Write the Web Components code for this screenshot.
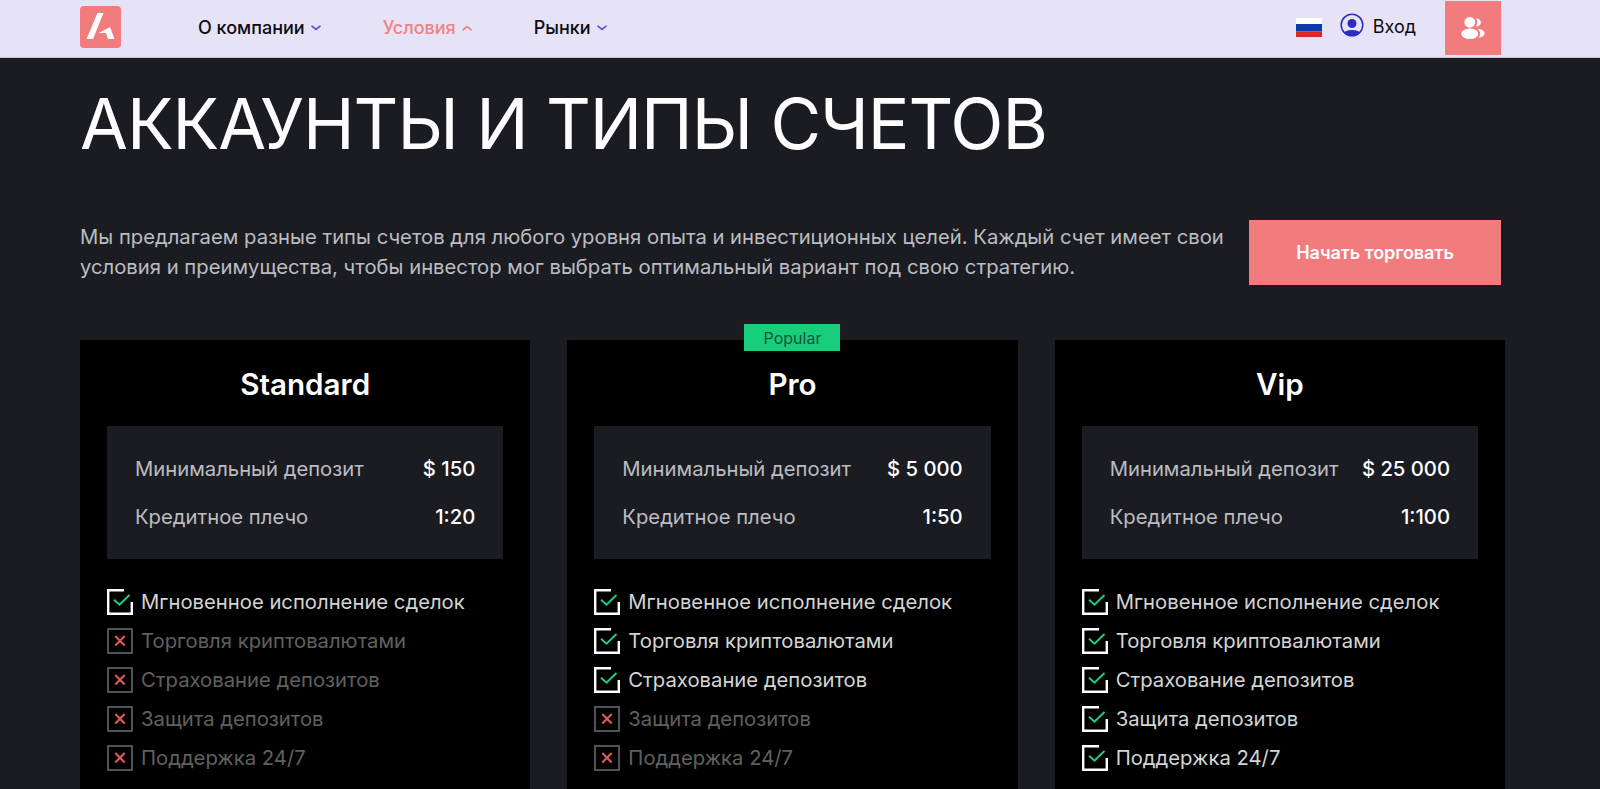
<!DOCTYPE html>
<html lang="ru">
<head>
<meta charset="utf-8">
<title>Аккаунты и типы счетов</title>
<style>
  body {
    margin: 0;
    height: 789px;
    overflow: hidden;
    background: #1b1c22;
    font-family: Inter, "Liberation Sans", sans-serif;
  }
</style>
</head>
<body>
<site-header></site-header>
<accounts-page>
  <span slot="title">АККАУНТЫ И ТИПЫ СЧЕТОВ</span>
  <span slot="intro">Мы предлагаем разные типы счетов для любого уровня опыта и инвестиционных целей. Каждый счет имеет свои<br>условия и преимущества, чтобы инвестор мог выбрать оптимальный вариант под свою стратегию.</span>
  <account-card name="Standard" deposit="$ 150" leverage="1:20" enabled="1"></account-card>
  <account-card name="Pro" deposit="$ 5 000" leverage="1:50" enabled="3" badge="Popular"></account-card>
  <account-card name="Vip" deposit="$ 25 000" leverage="1:100" enabled="5"></account-card>
</accounts-page>

<script>
class NavItem extends HTMLElement {
  constructor() {
    super();
    this.attachShadow({ mode: 'open' });
    this.shadowRoot.innerHTML = `
      <style>
        :host {
          display: flex;
          align-items: center;
          gap: 6px;
          color: #0b0b12;
          font-size: 18px;
          font-weight: 500;
          line-height: 24px;
          white-space: nowrap;
          cursor: pointer;
        }
        svg { stroke: #5b52d3; }
        :host([active]) { color: #f08286; }
        :host([active]) svg { stroke: #f08286; transform: rotate(180deg); }
      </style>
      <slot></slot>
      <svg width="10" height="6" viewBox="0 0 10 6" fill="none" stroke-width="1.7" stroke-linecap="round"><path d="M1 1.2L5 4.400L9 1.200"/></svg>
    `;
  }
}
customElements.define('nav-item', NavItem);

class SiteHeader extends HTMLElement {
  constructor() {
    super();
    this.attachShadow({ mode: 'open' });
    this.shadowRoot.innerHTML = `
      <style>
        :host {
          display: flex;
          box-sizing: border-box;
          height: 58px;
          padding: 1px 99px 0 80px;
          border-bottom: 1px solid #c3c1cf;
          background: #e7e3f7;
        }
        .logo { margin: 5px 77px 0 0; }
        nav {
          display: flex;
          gap: 62px;
          height: 54px;
          align-items: center;
        }
        .right {
          display: flex;
          margin-left: auto;
          height: 54px;
        }
        .flag { margin: 17px 18px 0 0; }
        .user { margin: 12px 9px 0 0; }
        .login {
          margin: 14px 29px 0 0;
          color: #0b0b12;
          font-size: 18px;
          line-height: 24px;
        }
        button {
          display: grid;
          place-items: center;
          width: 56px;
          height: 54px;
          padding: 0;
          border: none;
          background: #f27b7e;
        }
      </style>
      <svg class="logo" width="41" height="42" viewBox="0 0 41 42">
        <rect width="41" height="42" rx="4" fill="#f27b7e"/>
        <path fill="#fff" d="M17.500 7h6L13 33H6.500zM18.500 27L30 21l4.500 12h-6.600l-1.900-6z"/>
      </svg>
      <nav>
        <nav-item>О компании</nav-item>
        <nav-item active>Условия</nav-item>
        <nav-item>Рынки</nav-item>
      </nav>
      <div class="right">
        <svg class="flag" width="26" height="20" viewBox="0 0 26 20">
          <path fill="#fff" d="M0 0h26v7H0z"/>
          <path fill="#0a3bab" d="M0 6h26v7.500H0z"/>
          <path fill="#d8281f" d="M0 13.500h26v5.500H0z"/>
        </svg>
        <svg class="user" width="24" height="24" viewBox="0 0 24 24">
          <clipPath id="c"><circle cx="12" cy="12" r="11"/></clipPath>
          <circle cx="12" cy="12" r="10.800" fill="none" stroke="#2d2bc4" stroke-width="1.500"/>
          <circle cx="12" cy="10.500" r="4.500" fill="#2d2bc4"/>
          <ellipse cx="12" cy="21.500" rx="9" ry="4.500" fill="#2d2bc4" clip-path="url(#c)"/>
        </svg>
        <span class="login">Вход</span>
        <button aria-label="Регистрация">
          <svg width="24" height="24" viewBox="0 0 24 24" fill="#fff">
            <circle cx="8.800" cy="6.300" r="5.400"/>
            <ellipse cx="8.800" cy="17.800" rx="8.500" ry="5.300"/>
            <path d="M15 2.500a4 4 0 1 1 0 7.800c1.600-2.500 1.600-5.300 0-7.800zM16.500 13c4 0 7 1.700 7 4.200s-2.500 4.300-6 4.300c2.600-2.600 2.300-6-1-8.500z"/>
          </svg>
        </button>
      </div>
    `;
  }
}
customElements.define('site-header', SiteHeader);

class AccountsPage extends HTMLElement {
  constructor() {
    super();
    this.attachShadow({ mode: 'open' });
    this.shadowRoot.innerHTML = `
      <style>
        :host { display: block; padding: 0 95px 0 80px; }
        h1 {
          margin: 24px 0 0 0;
          color: #fdfdff;
          font-size: 69.500px;
          font-weight: 430;
          letter-spacing: -1.050px;
          line-height: 84px;
          white-space: nowrap;
        }
        .intro {
          display: flex;
          justify-content: space-between;
          margin: 54px 4px 55px 0;
        }
        p {
          margin: 2px 0 0 0;
          color: #bcbdc1;
          font-size: 20.250px;
          line-height: 29.500px;
          white-space: nowrap;
        }
        button {
          width: 252px;
          height: 65px;
          padding: 0;
          border: none;
          background: #f27b7e;
          color: #fff;
          font: 600 18px Inter, sans-serif;
          letter-spacing: -0.050px;
        }
        .cards {
          display: grid;
          grid-template-columns: repeat(3, 1fr);
          gap: 37px;
          height: 450px;
        }
      </style>
      <h1><slot name="title"></slot></h1>
      <div class="intro">
        <p><slot name="intro"></slot></p>
        <button>Начать торговать</button>
      </div>
      <div class="cards"><slot></slot></div>
    `;
  }
}
customElements.define('accounts-page', AccountsPage);

class FeatureItem extends HTMLElement {
  constructor() {
    super();
    this.attachShadow({ mode: 'open' });
  }

  connectedCallback() {
    const on = `
      <path stroke="#fff" stroke-width="2.400" d="M17 1.200H1.200v23.600h23.600V13"/>
      <path stroke="#1fcf82" stroke-width="1.900" d="M7 10.800l5.500 5L22.500 6"/>`;
    const off = `
      <path stroke="#4b5558" stroke-width="2" d="M1 1h24v24H1z"/>
      <path stroke="#d95a58" stroke-width="2.200" d="M8.300 8l9.400 9.600M17.700 8L8.300 17.600"/>`;
    this.shadowRoot.innerHTML = `
      <style>
        :host {
          display: flex;
          align-items: center;
          gap: 8px;
          height: 39px;
          color: #d4d4d4;
          font-size: 20.250px;
          white-space: nowrap;
        }
        :host([off]) { color: #606060; }
      </style>
      <svg width="26" height="26" viewBox="0 0 26 26" fill="none">${this.hasAttribute('off') ? off : on}</svg>
      <slot></slot>
    `;
  }
}
customElements.define('feature-item', FeatureItem);

class AccountCard extends HTMLElement {
  constructor() {
    super();
    this.attachShadow({ mode: 'open' });
  }

  connectedCallback() {
    const features = [
      'Мгновенное исполнение сделок',
      'Торговля криптовалютами',
      'Страхование депозитов',
      'Защита депозитов',
      'Поддержка 24/7'
    ];
    const enabled = Number(this.getAttribute('enabled'));
    const badge = this.getAttribute('badge');
    this.shadowRoot.innerHTML = `
      <style>
        :host {
          display: block;
          position: relative;
          box-sizing: border-box;
          padding: 26px 27px 0;
          background: #000;
        }
        .badge {
          position: absolute;
          top: -16px;
          left: 50%;
          transform: translateX(-50%);
          box-sizing: border-box;
          width: 96px;
          height: 27px;
          background: #17cf7b;
          color: #13513e;
          font-size: 16px;
          line-height: 28px;
          text-align: center;
        }
        h2 {
          margin: 0;
          color: #fff;
          font-size: 29.600px;
          font-weight: 600;
          line-height: 36px;
          text-align: center;
        }
        .info {
          box-sizing: border-box;
          height: 133px;
          margin: 24px 0 23px;
          padding: 18px 28px;
          background: #1b1c22;
        }
        .row {
          display: flex;
          justify-content: space-between;
          align-items: center;
          height: 48.500px;
          color: #bcbdc1;
          font-size: 20.250px;
          white-space: nowrap;
        }
        b { color: #fff; font-weight: 500; }
      </style>
      ${badge ? `<div class="badge">${badge}</div>` : ''}
      <h2>${this.getAttribute('name')}</h2>
      <div class="info">
        <div class="row"><span>Минимальный депозит</span><b>${this.getAttribute('deposit')}</b></div>
        <div class="row"><span>Кредитное плечо</span><b>${this.getAttribute('leverage')}</b></div>
      </div>
      ${features.map((f, i) => `<feature-item ${i < enabled ? '' : 'off'}>${f}</feature-item>`).join('')}
    `;
  }
}
customElements.define('account-card', AccountCard);
</script>
</body>
</html>
